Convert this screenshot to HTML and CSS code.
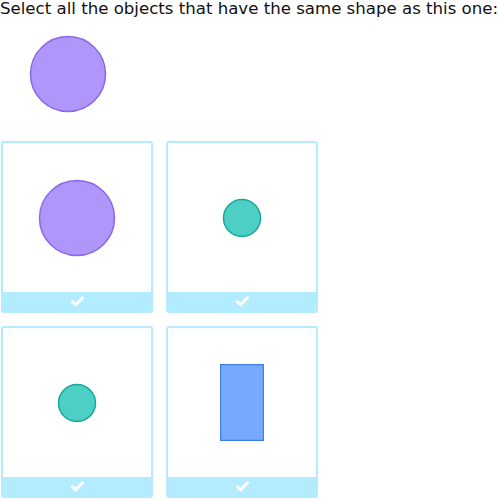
FILE: index.html
```html
<!DOCTYPE html>
<html>
<head>
<meta charset="utf-8">
<link rel="stylesheet" href="styles.css">
</head>
<body>
<div class="question">Select all the objects that have the same shape as this one:</div>
<div class="target">
  <svg width="78" height="78" viewBox="0 0 78 78"><circle cx="39" cy="39" r="37.5" class="purple"/></svg>
</div>
<div class="grid">
  <div class="card">
    <div class="shape">
      <svg width="78" height="78" viewBox="0 0 78 78"><circle cx="39" cy="39" r="37.5" class="purple"/></svg>
    </div>
    <div class="foot"><svg width="13" height="11" viewBox="0 0 13 11"><path d="M1.6 5.8 L4.8 8.8 L11.4 1.9" class="tick"/></svg></div>
  </div>
  <div class="card">
    <div class="shape">
      <svg width="40" height="40" viewBox="0 0 40 40"><circle cx="20" cy="20" r="18.5" class="teal"/></svg>
    </div>
    <div class="foot"><svg width="13" height="11" viewBox="0 0 13 11"><path d="M1.6 5.8 L4.8 8.8 L11.4 1.9" class="tick"/></svg></div>
  </div>
  <div class="card">
    <div class="shape">
      <svg width="40" height="40" viewBox="0 0 40 40"><circle cx="20" cy="20" r="18.5" class="teal"/></svg>
    </div>
    <div class="foot"><svg width="13" height="11" viewBox="0 0 13 11"><path d="M1.6 5.8 L4.8 8.8 L11.4 1.9" class="tick"/></svg></div>
  </div>
  <div class="card">
    <div class="shape">
      <svg width="44" height="77" viewBox="0 0 44 77"><rect x="0.5" y="0.5" width="43" height="76" class="blue"/></svg>
    </div>
    <div class="foot"><svg width="13" height="11" viewBox="0 0 13 11"><path d="M1.6 5.8 L4.8 8.8 L11.4 1.9" class="tick"/></svg></div>
  </div>
</div>
</body>
</html>
```
FILE: styles.css
```css
html, body {
  margin: 0;
  padding: 0;
  background: #fff;
}
body {
  font-family: "DejaVu Sans", Verdana, sans-serif;
  color: #111;
}
.question {
  font-size: 16.6px;
  line-height: 18px;
  padding: 0;
  white-space: nowrap;
}
.target {
  display: flex;
  padding: 17px 0 0 29px;
  height: 105px;
  box-sizing: border-box;
}
.target svg {
  display: block;
}
.grid {
  display: grid;
  grid-template-columns: 152px 152px;
  column-gap: 13px;
  row-gap: 13px;
  padding: 18px 0 0 1px;
}
.card {
  width: 152px;
  height: 172px;
  box-sizing: border-box;
  border: 2px solid #b3ebff;
  border-radius: 3px;
  display: flex;
  flex-direction: column;
  overflow: hidden;
}
.shape {
  flex: 1;
  display: flex;
  align-items: center;
  justify-content: center;
  background: #fff;
}
.shape svg {
  display: block;
}
.foot {
  height: 19px;
  background: #b3ebff;
  display: flex;
  align-items: center;
  justify-content: center;
}
.foot svg {
  display: block;
}
.tick {
  fill: none;
  stroke: #fff;
  stroke-width: 3;
  stroke-linecap: round;
  stroke-linejoin: round;
}
.purple {
  fill: #b095fb;
  stroke: #8a68e8;
  stroke-width: 1.5;
}
.teal {
  fill: #4ecfc6;
  stroke: #17a79a;
  stroke-width: 1.5;
}
.blue {
  fill: #77aaff;
  stroke: #3c7fe6;
  stroke-width: 1.5;
}
```
